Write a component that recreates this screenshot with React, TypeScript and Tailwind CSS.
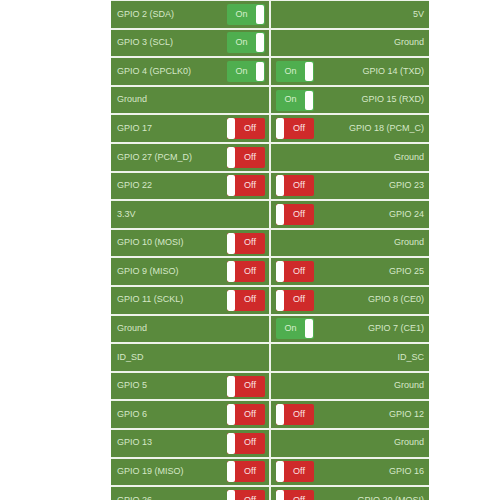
type Pin = { name: string; state?: "on" | "off" };

const rows: [Pin, Pin][] = [
  [{ name: "GPIO 2 (SDA)", state: "on" }, { name: "5V" }],
  [{ name: "GPIO 3 (SCL)", state: "on" }, { name: "Ground" }],
  [{ name: "GPIO 4 (GPCLK0)", state: "on" }, { name: "GPIO 14 (TXD)", state: "on" }],
  [{ name: "Ground" }, { name: "GPIO 15 (RXD)", state: "on" }],
  [{ name: "GPIO 17", state: "off" }, { name: "GPIO 18 (PCM_C)", state: "off" }],
  [{ name: "GPIO 27 (PCM_D)", state: "off" }, { name: "Ground" }],
  [{ name: "GPIO 22", state: "off" }, { name: "GPIO 23", state: "off" }],
  [{ name: "3.3V" }, { name: "GPIO 24", state: "off" }],
  [{ name: "GPIO 10 (MOSI)", state: "off" }, { name: "Ground" }],
  [{ name: "GPIO 9 (MISO)", state: "off" }, { name: "GPIO 25", state: "off" }],
  [{ name: "GPIO 11 (SCKL)", state: "off" }, { name: "GPIO 8 (CE0)", state: "off" }],
  [{ name: "Ground" }, { name: "GPIO 7 (CE1)", state: "on" }],
  [{ name: "ID_SD" }, { name: "ID_SC" }],
  [{ name: "GPIO 5", state: "off" }, { name: "Ground" }],
  [{ name: "GPIO 6", state: "off" }, { name: "GPIO 12", state: "off" }],
  [{ name: "GPIO 13", state: "off" }, { name: "Ground" }],
  [{ name: "GPIO 19 (MISO)", state: "off" }, { name: "GPIO 16", state: "off" }],
  [{ name: "GPIO 26", state: "off" }, { name: "GPIO 20 (MOSI)", state: "off" }],
];

function Toggle({ state }: { state: "on" | "off" }) {
  if (state === "on") {
    return (
      <div className="flex h-[21px] w-[38px] rounded-[2px] bg-[#4fae4f] overflow-hidden">
        <span className="flex-1 flex items-center justify-center text-[9px] text-[#d8f0cc]">On</span>
        <span className="w-[8px] my-[1px] mr-[1px] rounded-[2px] bg-white" />
      </div>
    );
  }
  return (
    <div className="flex h-[21px] w-[38px] rounded-[2px] bg-[#cf2a2a] overflow-hidden">
      <span className="w-[8px] rounded-[2px] bg-white" />
      <span className="flex-1 flex items-center justify-center text-[9px] text-[#fbe4e4]">Off</span>
    </div>
  );
}

export default function App() {
  return (
    <div className="min-h-screen bg-white" style={{ fontFamily: '"Liberation Sans", Arial, sans-serif' }}>
      <div className="ml-[111px] w-[318px] pt-[1px] grid grid-cols-2 gap-x-[2px] gap-y-[2px] bg-[#eef3ea]">
        {rows.map(([l, r], i) => (
          <div key={i} className="contents">
            <div className="h-[26.6px] bg-[#5a8a3d] flex items-center justify-between pl-[6px] pr-[4px]">
              <span className="text-[9px] text-[#d6e8c8]">{l.name}</span>
              {l.state && <Toggle state={l.state} />}
            </div>
            <div className="h-[26.6px] bg-[#5a8a3d] flex items-center justify-between pl-[5px] pr-[5px]">
              {r.state ? <Toggle state={r.state} /> : <span />}
              <span className="text-[9px] text-[#d6e8c8]">{r.name}</span>
            </div>
          </div>
        ))}
      </div>
    </div>
  );
}
